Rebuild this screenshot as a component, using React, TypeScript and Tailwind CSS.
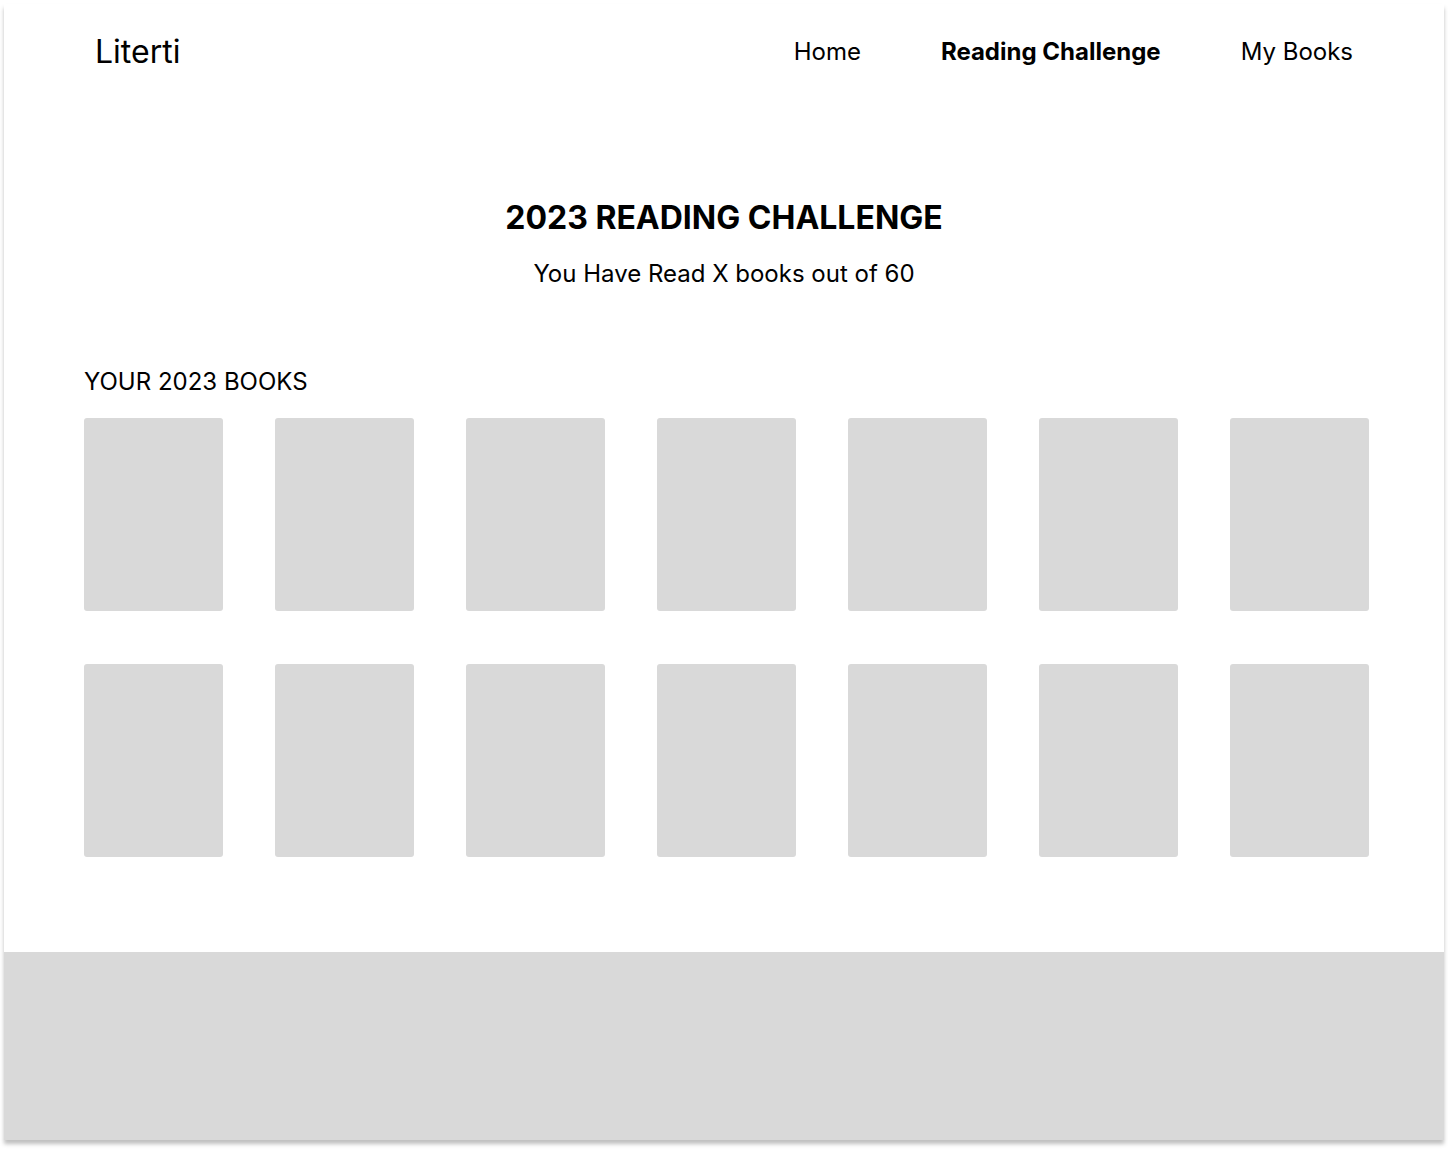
const navLinks = [
  { label: "Home", active: false },
  { label: "Reading Challenge", active: true },
  { label: "My Books", active: false },
];

const books = Array.from({ length: 14 }, (_, i) => i);

const App = () => {
  return (
    <div className="min-h-screen bg-white pl-[4px] pt-[4px] font-['Inter',sans-serif] text-black">
      <div className="flex h-[1136px] w-[1440px] flex-col bg-white shadow-[0_4px_4px_rgba(0,0,0,0.25)]">
        {/* header */}
        <header className="flex h-[94px] items-center justify-between px-[91px] pt-[2px]">
          <div className="text-[32px] leading-none">Literti</div>
          <nav className="flex items-center gap-20 text-[24px] leading-none">
            {navLinks.map((link) => (
              <a
                key={link.label}
                href="#"
                className={link.active ? "font-bold" : ""}
              >
                {link.label}
              </a>
            ))}
          </nav>
        </header>

        <main className="flex-1">
          <section className="flex flex-col items-center pt-[104px]">
            <h1 className="text-[32px] font-bold leading-none">
              2023 READING CHALLENGE
            </h1>
            <p className="mt-[28px] text-[24px] leading-none">
              You Have Read X books out of 60
            </p>
          </section>

          <section className="pl-[80px] pt-[84px]">
            <h2 className="text-[24px] leading-none">YOUR 2023 BOOKS</h2>
            <div className="mt-[24px] grid w-fit grid-cols-7 gap-x-[52px] gap-y-[53px]">
              {books.map((b) => (
                <div
                  key={b}
                  className="h-[193px] w-[139px] rounded-[3px] bg-[#d9d9d9]"
                />
              ))}
            </div>
          </section>
        </main>

        <footer className="h-[188px] bg-[#d9d9d9]" />
      </div>
    </div>
  );
};

export default App;
